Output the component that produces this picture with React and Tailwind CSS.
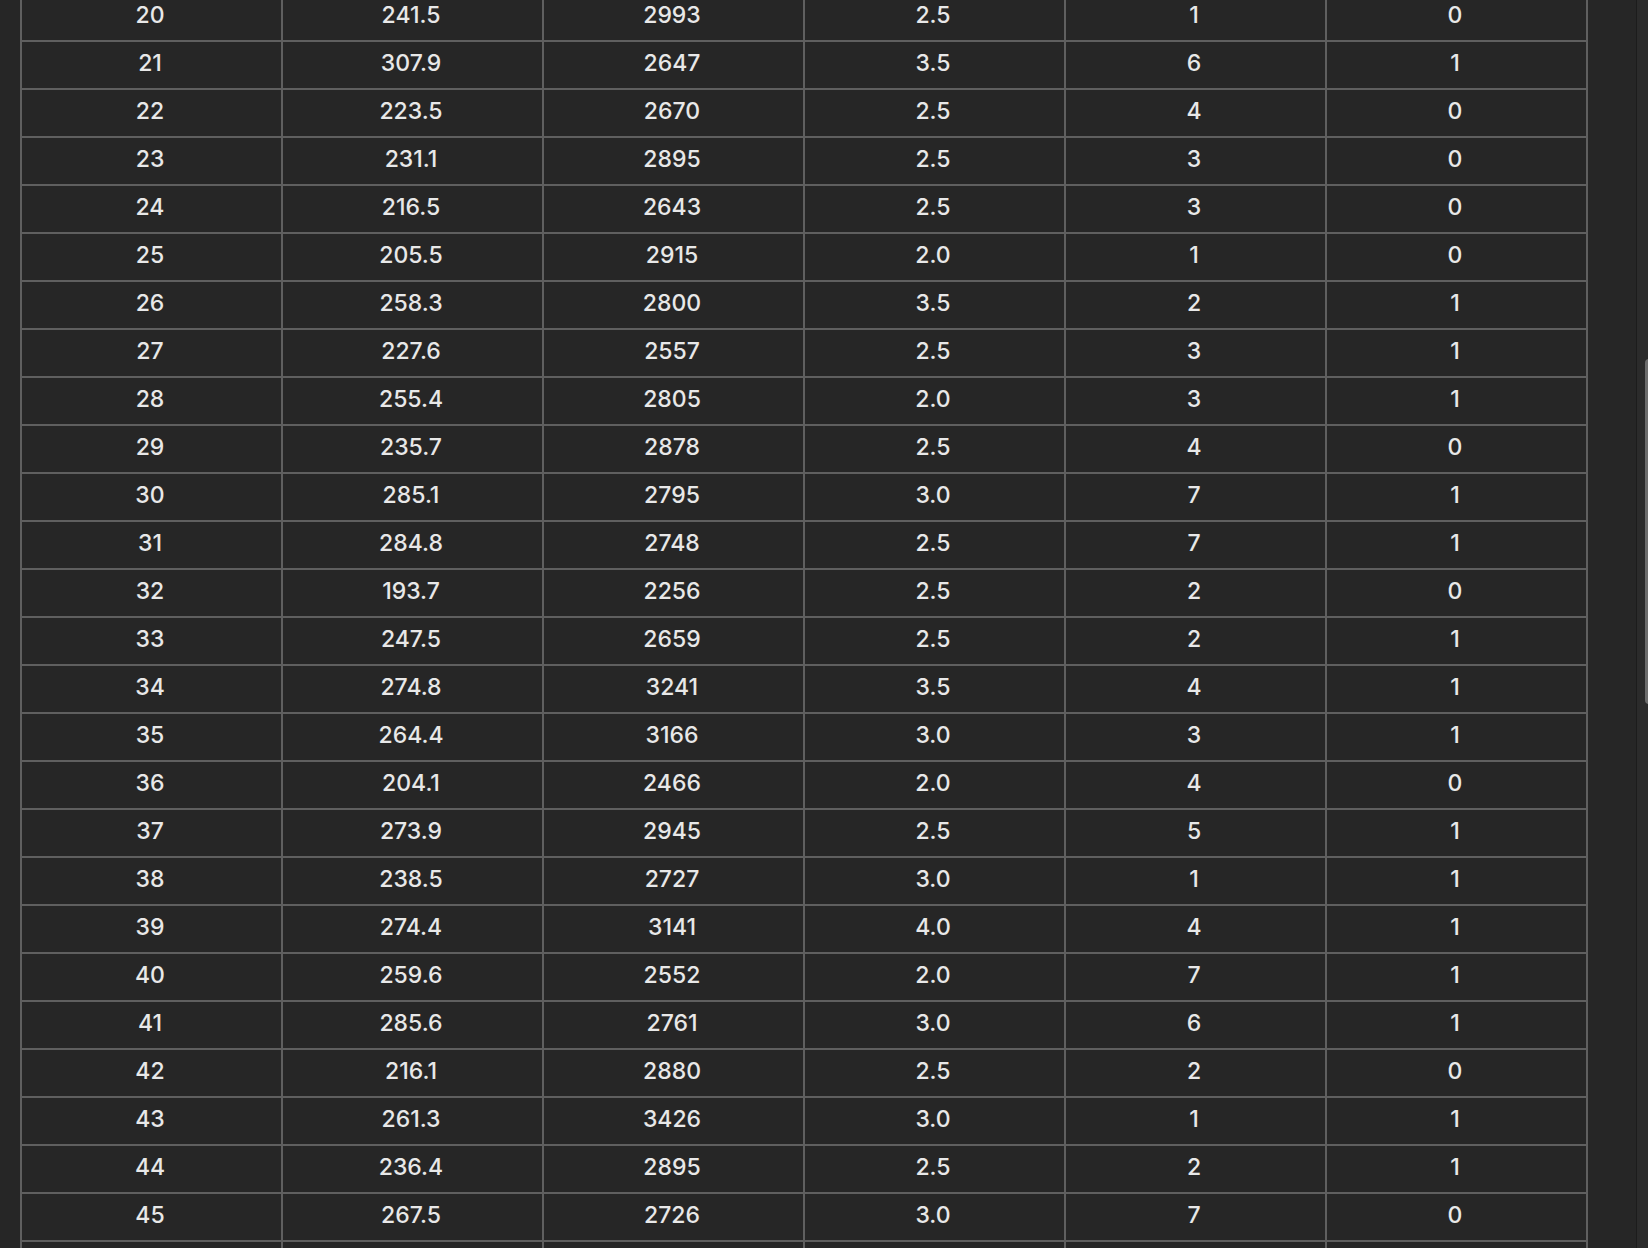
import React from "react";

const rows = [
  ["20", "241.5", "2993", "2.5", "1", "0"],
  ["21", "307.9", "2647", "3.5", "6", "1"],
  ["22", "223.5", "2670", "2.5", "4", "0"],
  ["23", "231.1", "2895", "2.5", "3", "0"],
  ["24", "216.5", "2643", "2.5", "3", "0"],
  ["25", "205.5", "2915", "2.0", "1", "0"],
  ["26", "258.3", "2800", "3.5", "2", "1"],
  ["27", "227.6", "2557", "2.5", "3", "1"],
  ["28", "255.4", "2805", "2.0", "3", "1"],
  ["29", "235.7", "2878", "2.5", "4", "0"],
  ["30", "285.1", "2795", "3.0", "7", "1"],
  ["31", "284.8", "2748", "2.5", "7", "1"],
  ["32", "193.7", "2256", "2.5", "2", "0"],
  ["33", "247.5", "2659", "2.5", "2", "1"],
  ["34", "274.8", "3241", "3.5", "4", "1"],
  ["35", "264.4", "3166", "3.0", "3", "1"],
  ["36", "204.1", "2466", "2.0", "4", "0"],
  ["37", "273.9", "2945", "2.5", "5", "1"],
  ["38", "238.5", "2727", "3.0", "1", "1"],
  ["39", "274.4", "3141", "4.0", "4", "1"],
  ["40", "259.6", "2552", "2.0", "7", "1"],
  ["41", "285.6", "2761", "3.0", "6", "1"],
  ["42", "216.1", "2880", "2.5", "2", "0"],
  ["43", "261.3", "3426", "3.0", "1", "1"],
  ["44", "236.4", "2895", "2.5", "2", "1"],
  ["45", "267.5", "2726", "3.0", "7", "0"],
  ["", "", "", "", "", ""],
];

export default function App() {
  return (
    <div
      className="relative h-screen w-full overflow-hidden bg-[#262626] text-[#e8e8e8]"
      style={{ fontFamily: "Inter, 'Noto Sans', sans-serif" }}
    >
      <div className="ml-[20px] mt-[-6px] w-[1568px] border-l-2 border-[#5f5f5f]">
        {rows.map((r, i) => (
          <div key={i} className="grid grid-cols-6 border-b-2 border-[#5f5f5f]">
            {r.map((c, j) => (
              <div
                key={j}
                className="flex h-[46px] items-center justify-center border-r-2 border-[#5f5f5f] pb-[3px] pr-[3px] text-[23px] font-medium leading-none"
              >
                {c}
              </div>
            ))}
          </div>
        ))}
      </div>
      <div className="absolute right-0 top-0 h-full w-[12px] border-l border-[#1c1c1c] bg-[#2b2b2b]">
        <div className="absolute left-[8px] top-[359px] h-[345px] w-[8px] rounded-full bg-[#6c6c6c]" />
      </div>
    </div>
  );
}
